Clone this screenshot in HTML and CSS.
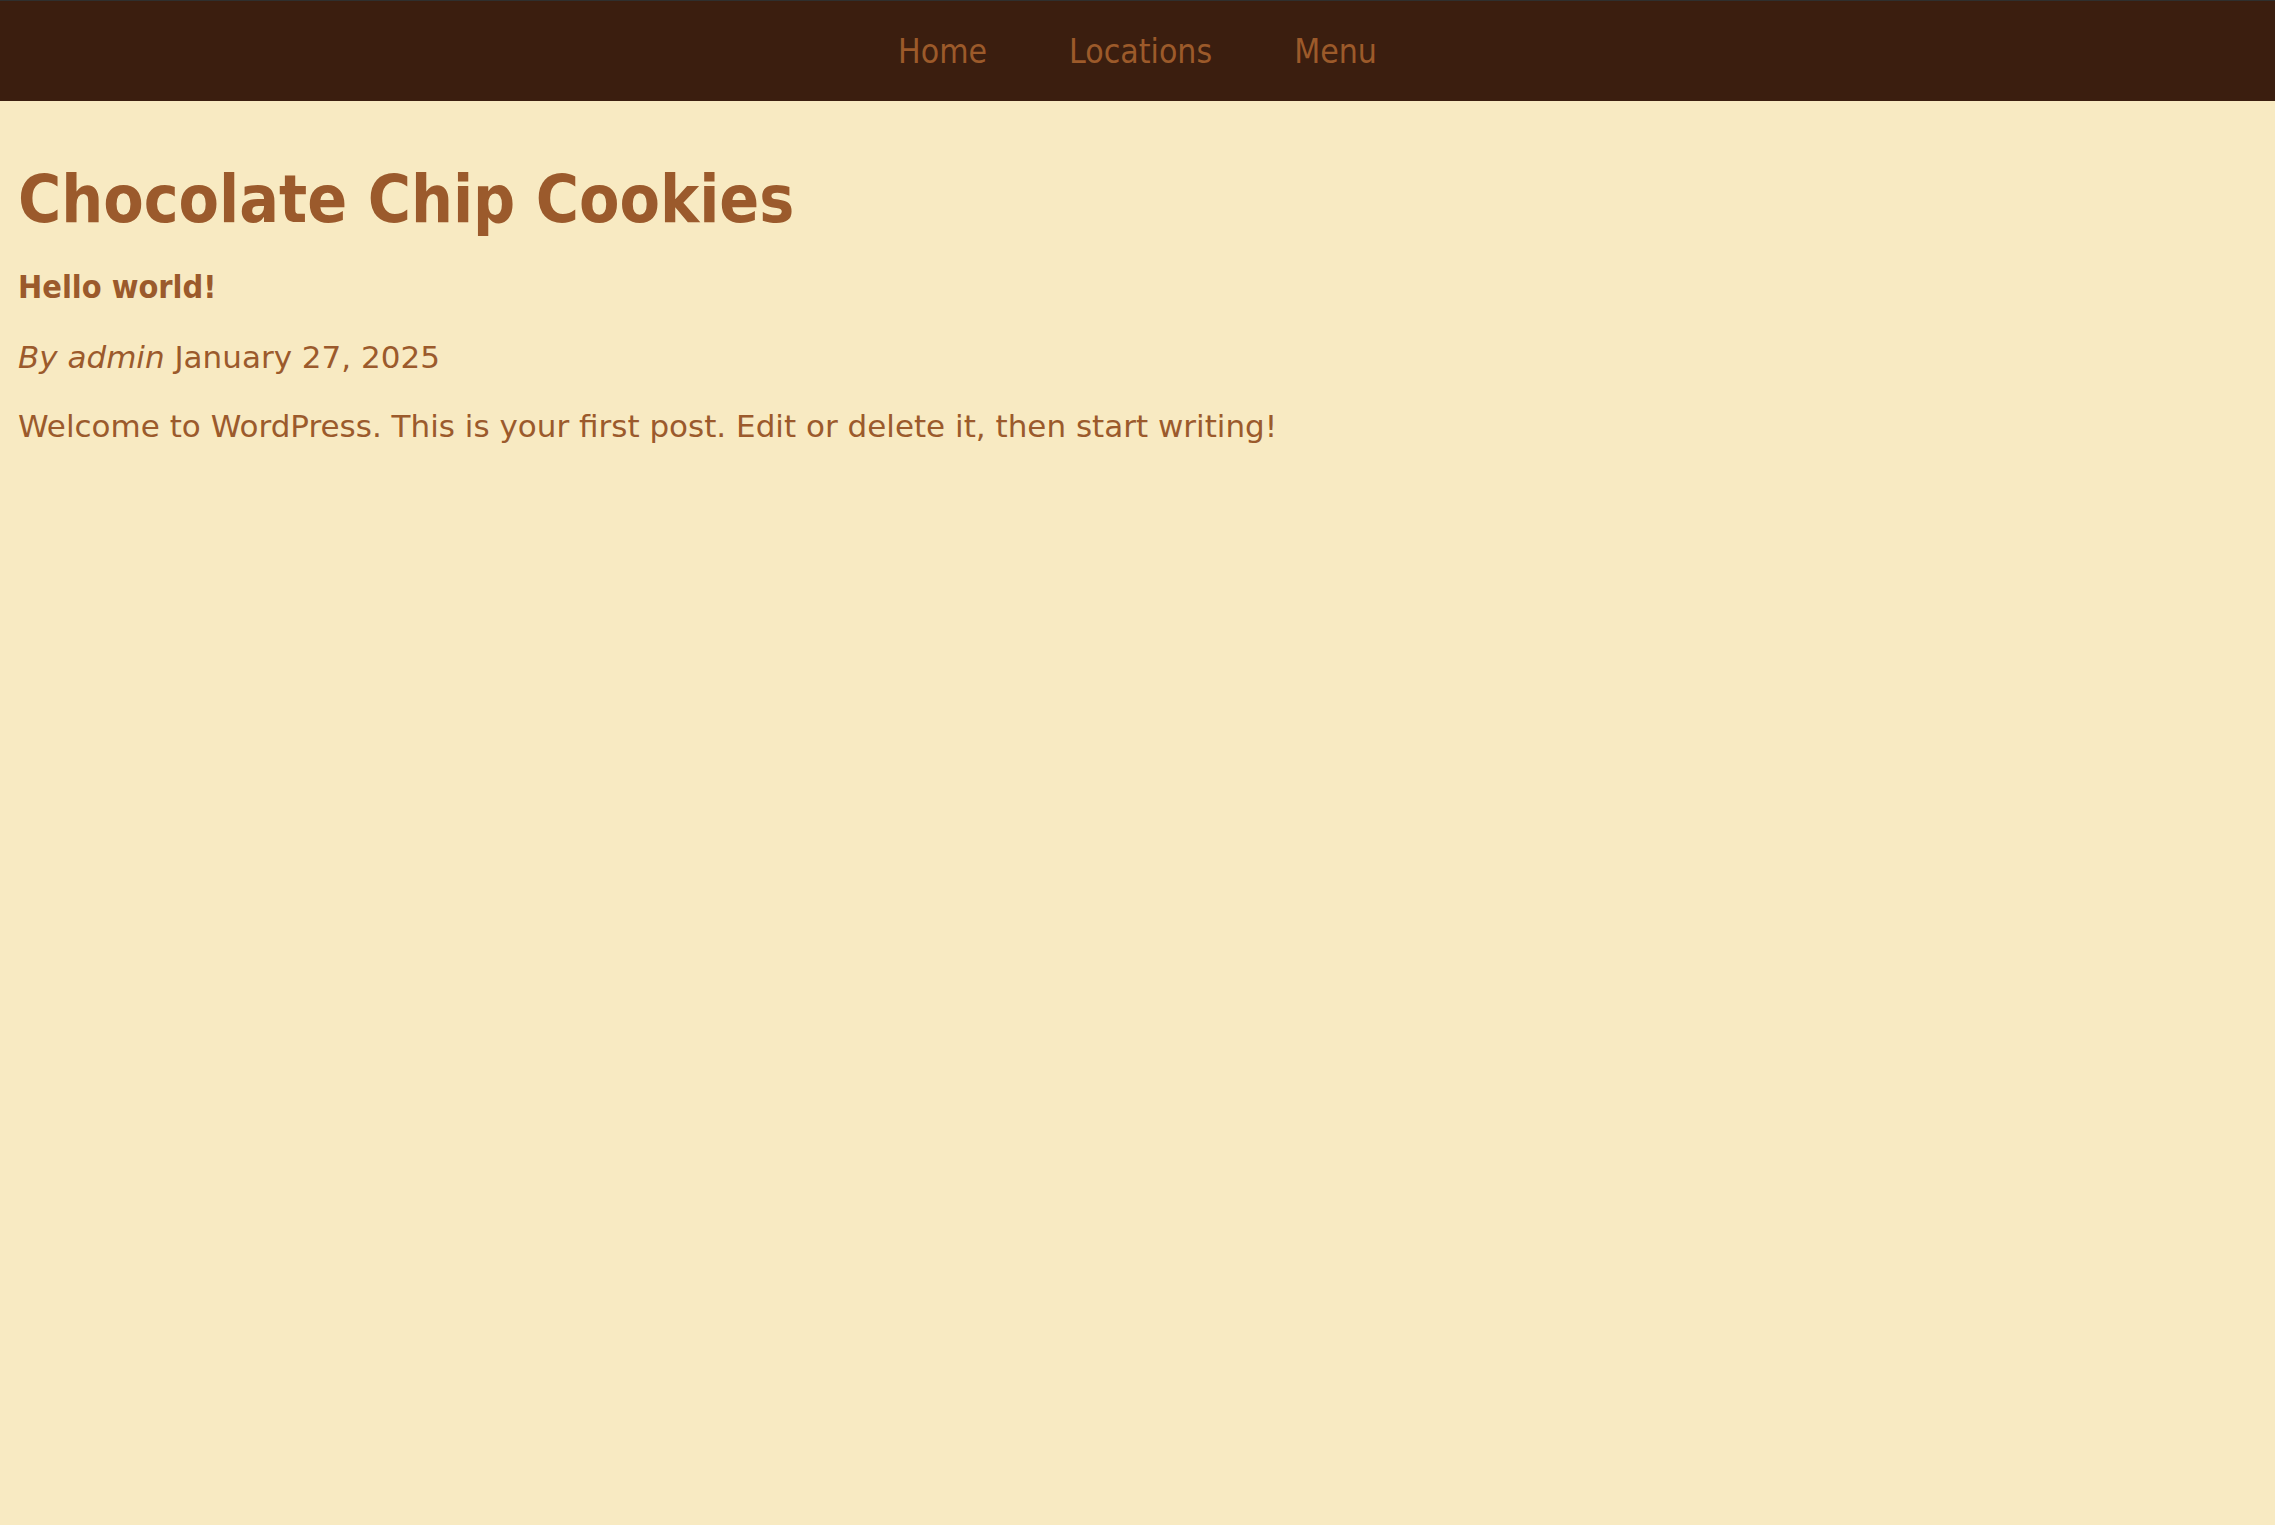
FILE: index.html
```html
<!DOCTYPE html>
<html lang="en">
<head>
<meta charset="utf-8">
<title>Chocolate Chip Cookies</title>
<link rel="stylesheet" href="styles.css">
</head>
<body>
<nav class="site-nav">
  <a class="nav-link" href="#">Home</a>
  <a class="nav-link" href="#">Locations</a>
  <a class="nav-link" href="#">Menu</a>
</nav>
<main class="content">
  <h1 class="page-title">Chocolate Chip Cookies</h1>
  <article class="post">
    <h2 class="post-title">Hello world!</h2>
    <p class="post-meta"><em>By admin</em> January 27, 2025</p>
    <p class="post-body">Welcome to WordPress. This is your first post. Edit or delete it, then start writing!</p>
  </article>
</main>
</body>
</html>
```
FILE: styles.css
```css
html {
  background: #f8eac2;
}
html, body {
  margin: 0;
  padding: 0;
}
body {
  color: #9b5a2c;
  font-family: "DejaVu Sans", sans-serif;
}
.site-nav {
  height: 100px;
  border-top: 1px solid #2f2f2e;
  background: #3b1e0f;
  display: flex;
  justify-content: center;
  align-items: center;
  gap: 82px;
}
.nav-link {
  font-family: "DejaVu Sans Condensed", "DejaVu Sans", sans-serif;
  font-stretch: condensed;
  font-size: 33.5px;
  color: #9c5a2a;
  text-decoration: none;
}
.content {
  padding: 0 18px;
}
.page-title {
  font-family: "DejaVu Sans Condensed", "DejaVu Sans", sans-serif;
  font-stretch: condensed;
  font-weight: bold;
  font-size: 65.5px;
  line-height: 78px;
  margin: 59px 0 0;
}
.post-title {
  font-family: "DejaVu Sans Condensed", "DejaVu Sans", sans-serif;
  font-stretch: condensed;
  font-weight: bold;
  font-size: 32.2px;
  line-height: 38px;
  margin: 30px 0 0;
}
.post-meta, .post-body {
  font-size: 31px;
  line-height: 36px;
  margin: 33px 0 0;
}
.post-meta em {
  font-style: italic;
}
```
